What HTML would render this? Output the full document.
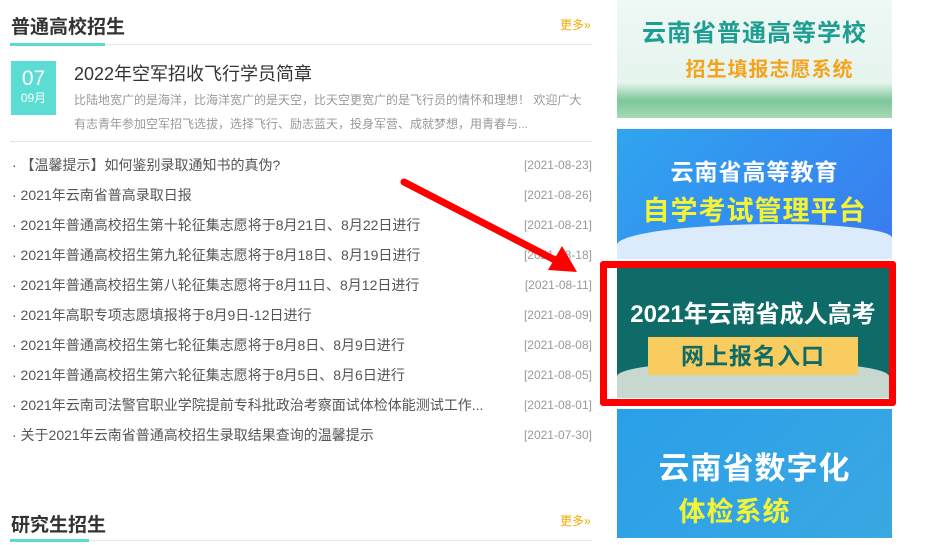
<!DOCTYPE html>
<html><head><meta charset="utf-8"><style>
*{margin:0;padding:0;box-sizing:border-box}
body{width:933px;height:545px;overflow:hidden;background:#fff;font-family:"Liberation Sans","Noto Sans CJK SC",sans-serif;position:relative}
.abs{position:absolute}
.h{font-size:19px;font-weight:bold;color:#333;left:11px}
.more{font-size:12px;color:#f6a800;left:560px}
.line{left:10px;width:582px;height:1px;background:#e4e4e4}
.bar{left:10px;height:3px;background:#5bdad3}
.li{left:12px;font-size:14px;color:#555;white-space:nowrap;line-height:16px}
.dt{right:341px;font-size:12px;color:#999;line-height:16px}
.bn{left:617px;width:275px;overflow:hidden;font-weight:bold;text-align:center;letter-spacing:1px}
</style></head><body>
<div class="abs h" style="top:12px">普通高校招生</div>
<div class="abs more" style="top:16px">更多»</div>
<div class="abs line" style="top:44px"></div>
<div class="abs bar" style="top:43px;width:95px"></div>
<div class="abs" style="left:11px;top:61px;width:45px;height:54px;background:#5cddd4;color:#fff;text-align:center">
<div style="font-size:21px;line-height:22px;margin-top:7px">07</div><div style="font-size:12px;line-height:16px">09月</div></div>
<div class="abs" style="left:74px;top:60px;font-size:18px;color:#333">2022年空军招收飞行学员简章</div>
<div class="abs" style="left:74px;top:88px;width:515px;font-size:12px;color:#999;line-height:24px">比陆地宽广的是海洋，比海洋宽广的是天空，比天空更宽广的是飞行员的情怀和理想！ 欢迎广大有志青年参加空军招飞选拔，选择飞行、励志蓝天，投身军营、成就梦想，用青春与...</div>
<div class="abs line" style="top:141px"></div>

<div class="abs li" style="top:157px">· 【温馨提示】如何鉴别录取通知书的真伪?</div><div class="abs dt" style="top:157px">[2021-08-23]</div>
<div class="abs li" style="top:187px">· 2021年云南省普高录取日报</div><div class="abs dt" style="top:187px">[2021-08-26]</div>
<div class="abs li" style="top:217px">· 2021年普通高校招生第十轮征集志愿将于8月21日、8月22日进行</div><div class="abs dt" style="top:217px">[2021-08-21]</div>
<div class="abs li" style="top:247px">· 2021年普通高校招生第九轮征集志愿将于8月18日、8月19日进行</div><div class="abs dt" style="top:247px">[2021-08-18]</div>
<div class="abs li" style="top:277px">· 2021年普通高校招生第八轮征集志愿将于8月11日、8月12日进行</div><div class="abs dt" style="top:277px">[2021-08-11]</div>
<div class="abs li" style="top:307px">· 2021年高职专项志愿填报将于8月9日-12日进行</div><div class="abs dt" style="top:307px">[2021-08-09]</div>
<div class="abs li" style="top:337px">· 2021年普通高校招生第七轮征集志愿将于8月8日、8月9日进行</div><div class="abs dt" style="top:337px">[2021-08-08]</div>
<div class="abs li" style="top:367px">· 2021年普通高校招生第六轮征集志愿将于8月5日、8月6日进行</div><div class="abs dt" style="top:367px">[2021-08-05]</div>
<div class="abs li" style="top:397px">· 2021年云南司法警官职业学院提前专科批政治考察面试体检体能测试工作...</div><div class="abs dt" style="top:397px">[2021-08-01]</div>
<div class="abs li" style="top:427px">· 关于2021年云南省普通高校招生录取结果查询的温馨提示</div><div class="abs dt" style="top:427px">[2021-07-30]</div>

<div class="abs h" style="top:510px">研究生招生</div>
<div class="abs more" style="top:512px">更多»</div>
<div class="abs line" style="top:540px"></div>
<div class="abs bar" style="top:539px;width:79px"></div>

<div class="abs bn" style="top:0;height:118px;background:linear-gradient(#eef8f4,#e6f4ee 70%,#7cc79a 85%,#a6d9b4)">
<div style="color:#1e9e93;font-size:24px;margin-top:13px">云南省普通高等学校</div>
<div style="color:#f5a31c;font-size:20px;margin-top:5px;padding-left:30px">招生填报志愿系统</div></div>
<div class="abs bn" style="top:129px;height:130px;background:linear-gradient(135deg,#2fa5ef,#3a7af0);">
<div style="position:absolute;left:0;right:0;bottom:0;height:35px;background:#dcebfb;border-radius:60% 40% 0 0"></div>
<div style="position:relative;color:#fff;font-size:23px;margin-top:24px">云南省高等教育</div>
<div style="position:relative;color:#f4f437;font-size:27px;margin-top:2px">自学考试管理平台</div></div>
<div class="abs" style="left:600px;top:261px;width:296px;height:145px;border:7px solid #f00;border-radius:3px"></div>
<div class="abs bn" style="top:268px;height:130px;left:617px;width:272px;background:#0e6b67">
<div style="position:absolute;left:0;right:0;bottom:0;height:36px;background:#c6d8d0;border-radius:40% 40% 0 0"></div>
<div style="position:relative;color:#fff;font-size:24px;margin-top:26px;letter-spacing:0">2021年云南省成人高考</div>
<div style="position:relative;margin:8px auto 0;width:210px;height:38px;background:#f8cc5e;color:#0e6b67;font-size:23px;line-height:38px">网上报名入口</div></div>
<div class="abs bn" style="top:409px;height:129px;background:linear-gradient(135deg,#2a9fe8,#3aa8e2)">
<div style="color:#fff;font-size:31px;margin-top:34px">云南省数字化</div>
<div style="color:#f4f437;font-size:27px;margin-top:2px;padding-right:40px">体检系统</div></div>

<svg class="abs" style="left:0;top:0" width="933" height="545">
<line x1="404" y1="182" x2="555" y2="260" stroke="#f00" stroke-width="7" stroke-linecap="round"/>
<polygon points="577,272 548,270 562,246" fill="#f00"/>
</svg>
</body></html>
